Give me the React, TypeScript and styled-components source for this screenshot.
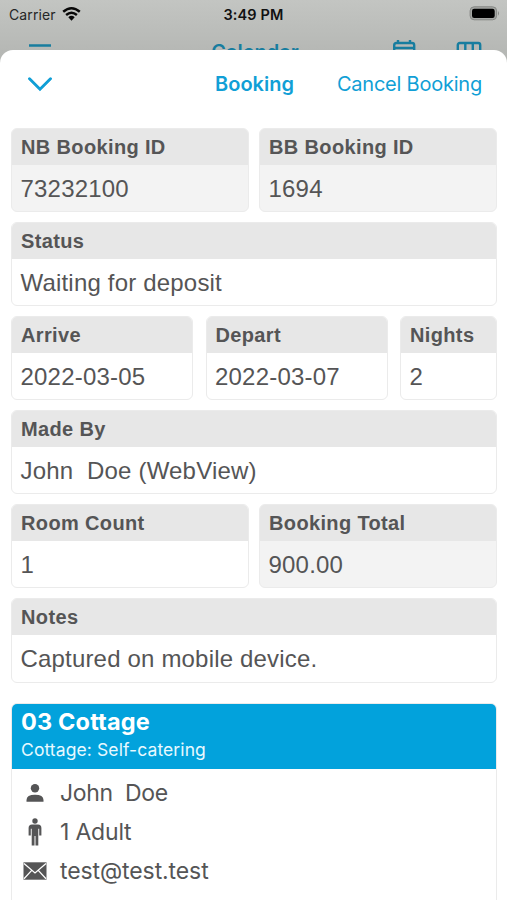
import React from "react";
import styled, { createGlobalStyle } from "styled-components";

const GlobalStyle = createGlobalStyle`
  *, *::before, *::after { box-sizing: border-box; }
  html, body { margin: 0; padding: 0; background: #fff; }
`;

const BLUE = "#119fd6";
const INK = "#555556";

const Screen = styled.div`
  width: 507px;
  height: 900px;
  overflow: hidden;
  display: flex;
  flex-direction: column;
  background: linear-gradient(#c3c5c2 0, #b6b8b5 50px, #b3b5b2 70px);
  font-family: Inter, sans-serif;
  white-space: pre;
`;

const StatusBar = styled.header`
  height: 27px;
  flex: none;
  display: grid;
  grid-template-columns: 1fr auto 1fr;
  align-items: center;
  padding: 1px 7px 0 9px;
  color: #111;
`;

const Carrier = styled.div`
  display: flex;
  align-items: center;
  gap: 6px;
  font-size: 14px;
  letter-spacing: 0.1px;
  color: #252626;
`;

const Clock = styled.div`
  font-size: 14.5px;
  font-weight: 600;
  letter-spacing: 0.15px;
  margin-right: 2px;
`;

const Battery = styled.svg`
  justify-self: end;
  margin-top: -2px;
`;

const NavBar = styled.div`
  height: 23px;
  flex: none;
  overflow: hidden;
  display: grid;
  grid-template-columns: 1fr auto 1fr;
  align-items: start;
  padding: 12px 25px 0 28px;
  color: #187d9f;
`;

const NavTitle = styled.div`
  font-size: 20px;
  font-weight: 600;
  line-height: 24px;
  margin-top: 1px;
`;

const NavActions = styled.div`
  display: flex;
  justify-content: flex-end;
  gap: 40px;
`;

const Sheet = styled.main`
  flex: 1;
  min-height: 0;
  overflow: hidden;
  background: #fff;
  border-radius: 13px 13px 0 0;
`;

const SheetHeader = styled.div`
  height: 78px;
  display: grid;
  grid-template-columns: 1fr auto 1fr;
  align-items: center;
  padding: 0 25px 10px 28px;
  color: ${BLUE};
`;

const SheetTitle = styled.h1`
  margin: 0 1px 0 0;
  font-size: 20px;
  font-weight: 600;
  letter-spacing: 0;
`;

const CancelButton = styled.button`
  justify-self: end;
  border: 0;
  padding: 0;
  background: none;
  color: inherit;
  font: 400 20px Inter, sans-serif;
  letter-spacing: -0.22px;
`;

const Fields = styled.section`
  display: grid;
  gap: 10px;
  padding: 0 10px 0 11px;
`;

const FieldRow = styled.div<{ $columns: string; $gap?: number }>`
  display: grid;
  grid-template-columns: ${(p) => p.$columns};
  column-gap: ${(p) => p.$gap ?? 10}px;
`;

const FieldCard = styled.div<{ $muted?: boolean }>`
  height: 84.1px;
  border: 1px solid #ebebeb;
  border-radius: 6px;
  overflow: hidden;
  background: ${(p) => (p.$muted ? "#f3f3f3" : "#fff")};
  color: ${INK};
  font-family: "Liberation Sans", Arial, sans-serif;
`;

const FieldLabel = styled.div`
  height: 36px;
  padding-left: 9px;
  background: #e7e7e7;
  font-size: 20px;
  font-weight: 700;
  line-height: 36px;
  letter-spacing: 0.36px;
`;

const FieldValue = styled.div<{ $tracking?: number }>`
  padding-left: 8.5px;
  font-size: 24px;
  line-height: 48px;
  letter-spacing: ${(p) => p.$tracking ?? 0.1}px;
`;

const RoomCard = styled.section`
  height: 230px;
  margin: 20px 10px 0 11px;
  border: 1px solid #ebebeb;
  border-radius: 6px;
  overflow: hidden;
`;

const RoomHeader = styled.div`
  height: 65px;
  padding: 4px 9px 0;
  background: #02a2dc;
  color: #fff;
`;

const RoomName = styled.h2`
  margin: 0;
  font-size: 23.5px;
  font-weight: 700;
  line-height: 28px;
  letter-spacing: 0.15px;
`;

const RoomType = styled.div`
  font-size: 17.5px;
  line-height: 28px;
  letter-spacing: 0.1px;
  color: #e8f9ff;
`;

const GuestList = styled.ul`
  list-style: none;
  margin: 0;
  padding: 5px 0 0 10px;
`;

const GuestItem = styled.li`
  height: 39px;
  display: grid;
  grid-template-columns: 26px 1fr;
  column-gap: 12px;
  align-items: center;
  color: ${INK};
  font-size: 23px;

  svg { justify-self: center; }
`;

const GuestText = styled.span<{ $tracking: number }>`
  letter-spacing: ${(p) => p.$tracking}px;
`;

function Field({ label, value, muted, tracking }: { label: string; value: string; muted?: boolean; tracking?: number }) {
  return (
    <FieldCard $muted={muted}>
      <FieldLabel>{label}</FieldLabel>
      <FieldValue $tracking={tracking}>{value}</FieldValue>
    </FieldCard>
  );
}

const WifiIcon = () => (
  <svg width="19" height="14" viewBox="0 0 19 14">
    <g fill="none" stroke="#080808" strokeWidth="2.5">
      <path d="M1.2 4.8Q9.5-2.2 17.8 4.8" />
      <path d="M4.1 8Q9.5 3.5 14.9 8" />
    </g>
    <path d="M6.3 10.2Q9.5 7.5 12.7 10.2L9.5 13.7Z" fill="#080808" />
  </svg>
);

const MenuIcon = () => (
  <svg width="24" height="20" viewBox="0 0 24 20" stroke="currentColor" strokeWidth="2.6">
    <path d="M1 6.5H23M1 14H23" />
  </svg>
);

const CalendarIcon = () => (
  <svg width="24" height="24" viewBox="0 0 24 24" fill="none" stroke="currentColor" strokeWidth="2.4">
    <path d="M2.2 22V6.2Q2.2 4 4.4 4H20Q22.2 4 22.2 6.2V22ZM2 9H22M6 1V5M18 1V5" />
  </svg>
);

const ColumnsIcon = () => (
  <svg width="26" height="24" viewBox="0 0 26 24" fill="none" stroke="currentColor" strokeWidth="2.4">
    <rect x="1.8" y="4" width="22.4" height="18" rx="2" />
    <path d="M9.3 4V22M16.8 4V22" />
  </svg>
);

const ChevronDownIcon = () => (
  <svg width="24" height="15" viewBox="0 0 24 15" fill="none" stroke="currentColor" strokeWidth="2.9">
    <path d="M1.5 1.7L12 12.2L22.5 1.7" strokeLinecap="round" />
  </svg>
);

const PersonIcon = () => (
  <svg width="18" height="18" viewBox="0 0 18 18" fill={INK}>
    <circle cx="9" cy="4.3" r="4.2" />
    <path d="M0.5 17.8V16Q0.5 10.8 9 10.8Q17.5 10.8 17.5 16V17.8Z" />
  </svg>
);

const AdultIcon = () => (
  <svg width="14" height="28" viewBox="0 0 14 28" fill={INK}>
    <circle cx="7" cy="3" r="2.7" />
    <path d="M4 6.6H10Q13.4 6.8 13.4 10V17.5H11.2V10.7H10.3V27.6H7.5V18H6.5V27.6H3.7V10.7H2.8V17.5H0.6V10Q0.6 6.8 4 6.6Z" />
  </svg>
);

const MailIcon = () => (
  <svg width="24" height="18" viewBox="0 0 24 18">
    <rect x="0.5" y="0.3" width="23" height="17.4" fill={INK} />
    <path d="M1 1.5L12 11L23 1.5M1 16.8L8.5 8.6M23 16.8L15.5 8.6" fill="none" stroke="#fff" strokeWidth="1.3" />
  </svg>
);

export default function App() {
  return (
    <Screen>
      <GlobalStyle />
      <StatusBar>
        <Carrier>
          <span>Carrier</span>
          <WifiIcon />
        </Carrier>
        <Clock>3:49 PM</Clock>
        <Battery width="31" height="15" viewBox="0 0 31 15">
          <rect x="1.1" y="0.8" width="26.5" height="13" rx="4" fill="#a5a7a4" stroke="#858784" />
          <rect x="3" y="2.7" width="22.7" height="9.3" rx="2.2" fill="#000" />
          <path d="M29 5Q31 7.4 29 9.8Z" fill="#858784" />
        </Battery>
      </StatusBar>
      <NavBar>
        <MenuIcon />
        <NavTitle>Calendar</NavTitle>
        <NavActions>
          <CalendarIcon />
          <ColumnsIcon />
        </NavActions>
      </NavBar>
      <Sheet>
        <SheetHeader>
          <ChevronDownIcon />
          <SheetTitle>Booking</SheetTitle>
          <CancelButton>Cancel Booking</CancelButton>
        </SheetHeader>
        <Fields>
          <FieldRow $columns="1fr 1fr">
            <Field label="NB Booking ID" value="73232100" muted tracking={0.2} />
            <Field label="BB Booking ID" value="1694" muted tracking={0.2} />
          </FieldRow>
          <Field label="Status" value="Waiting for deposit" tracking={0.19} />
          <FieldRow $columns="182px 182px 1fr" $gap={12.5}>
            <Field label="Arrive" value="2022-03-05" tracking={0.2} />
            <Field label="Depart" value="2022-03-07" tracking={0.2} />
            <Field label="Nights" value="2" />
          </FieldRow>
          <Field label="Made By" value="John  Doe (WebView)" tracking={0.19} />
          <FieldRow $columns="1fr 1fr">
            <Field label="Room Count" value="1" />
            <Field label="Booking Total" value="900.00" muted tracking={0.2} />
          </FieldRow>
          <Field label="Notes" value="Captured on mobile device." tracking={0.18} />
        </Fields>
        <RoomCard>
          <RoomHeader>
            <RoomName>03 Cottage</RoomName>
            <RoomType>Cottage: Self-catering</RoomType>
          </RoomHeader>
          <GuestList>
            <GuestItem>
              <PersonIcon />
              <GuestText $tracking={-0.35}>John  Doe</GuestText>
            </GuestItem>
            <GuestItem>
              <AdultIcon />
              <GuestText $tracking={-0.2}>1 Adult</GuestText>
            </GuestItem>
            <GuestItem>
              <MailIcon />
              <GuestText $tracking={-0.1}>test@test.test</GuestText>
            </GuestItem>
          </GuestList>
        </RoomCard>
      </Sheet>
    </Screen>
  );
}
